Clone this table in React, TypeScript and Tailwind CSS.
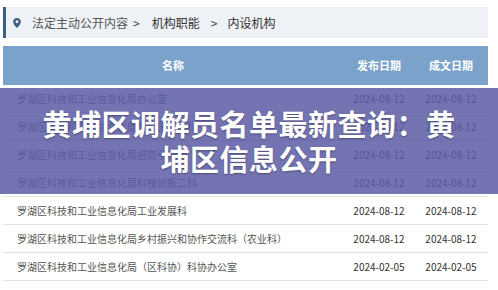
const rows = [
  { name: "罗湖区科技和工业信息化局办公室", pub: "2024-08-12", doc: "2024-08-12" },
  { name: "罗湖区科技和工业信息化局科技创新一科", pub: "2024-08-12", doc: "2024-08-12" },
  { name: "罗湖区科技和工业信息化局招商引资科", pub: "2024-08-12", doc: "2024-08-12" },
  { name: "罗湖区科技和工业信息化局科技创新二科", pub: "2024-08-12", doc: "2024-08-12" },
  { name: "罗湖区科技和工业信息化局工业发展科", pub: "2024-08-12", doc: "2024-08-12" },
  { name: "罗湖区科技和工业信息化局乡村振兴和协作交流科（农业科）", pub: "2024-08-12", doc: "2024-08-12" },
  { name: "罗湖区科技和工业信息化局（区科协）科协办公室", pub: "2024-02-05", doc: "2024-02-05" },
]

const font = { fontFamily: '"Noto Sans CJK SC", "Noto Sans", sans-serif' }

function Pin() {
  return (
    <svg width="8" height="10" viewBox="0 0 10 13" className="shrink-0">
      <path
        d="M5 0C2.2 0 0 2.2 0 4.9 0 8.4 5 13 5 13s5-4.6 5-8.1C10 2.2 7.8 0 5 0zm0 6.8a1.9 1.9 0 1 1 0-3.8 1.9 1.9 0 0 1 0 3.8z"
        fill="#3f5f80"
      />
    </svg>
  )
}

export default function App() {
  return (
    <div className="relative w-[498px] h-[290px] overflow-hidden bg-white" style={font}>
      <div className="pl-[3px] pr-[10px] pt-[7px]">
        <div className="h-[31px] flex items-center bg-[#eef1f5] border-l-[3px] border-[#3f5f80] pl-[7px] text-[12px] text-[#333]">
          <Pin />
          <span className="ml-[11px] text-[#555]">法定主动公开内容</span>
          <span className="ml-[5px] mr-[12px] text-[#444]">&gt;</span>
          <span>机构职能</span>
          <span className="ml-[11px] mr-[10px] text-[#444]">&gt;</span>
          <span>内设机构</span>
        </div>

        <div className="mt-[8px]">
          <div className="h-[39px] flex items-center bg-[#7aa2ca] text-white text-[11px] font-bold">
            <div className="w-[340px] text-center">名称</div>
            <div className="w-[72px] text-center">发布日期</div>
            <div className="w-[72px] text-center">成文日期</div>
          </div>
          {rows.map((r) => (
            <div key={r.name} className="h-[28px] flex items-center border-b border-[#e3e3e3] text-[10px]">
              <div className="w-[340px] pl-[14px] text-[#555] whitespace-nowrap">{r.name}</div>
              <div className="w-[72px] text-center text-[#333]">{r.pub}</div>
              <div className="w-[72px] text-center text-[#333]">{r.doc}</div>
            </div>
          ))}
        </div>
      </div>

      <div className="absolute left-0 right-0 top-[88px] h-[106px] bg-[#5c5ca6]/85 flex items-center justify-center">
        <div className="text-white font-bold text-[29px] leading-[35px] tracking-[0.5px] text-center w-[440px] [text-shadow:0_1px_2px_rgba(0,0,0,0.35)]">
          黄埔区调解员名单最新查询：黄
          <br />
          埔区信息公开
        </div>
      </div>
    </div>
  )
}
